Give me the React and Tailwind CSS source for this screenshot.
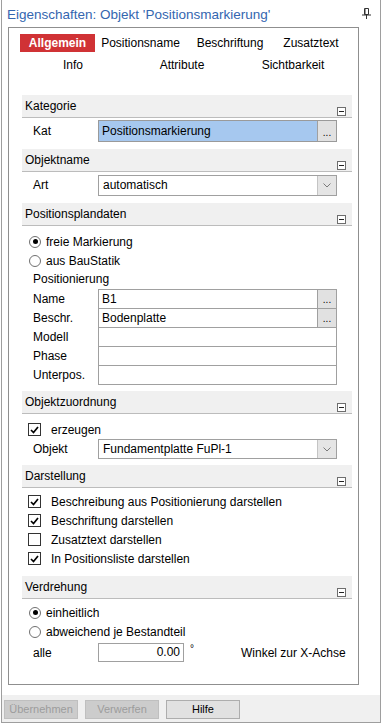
import clsx from 'clsx';

const Minus = () => (
  <span className="mb-[1px] flex h-[9px] w-[9px] items-center justify-center self-end border border-[#6d6d6d] bg-white">
    <span className="h-px w-[5px] bg-[#222]" />
  </span>
);

const SectionHeader = ({ title }) => (
  <div className="flex h-[23px] items-center justify-between border-b border-[#bcbcbc] bg-[#f0f0f0] pl-[3px] pr-[6px]">
    <span className="leading-[15px]">{title}</span>
    <Minus />
  </div>
);

const Dots = () => (
  <span className="flex w-[19px] items-end justify-center border-l border-[#a0a0a0] bg-[#e1e1e1] pb-[3px] text-[10px] leading-[10px]">
    ...
  </span>
);

const Chevron = () => (
  <span className="flex w-[19px] items-center justify-center border-l border-[#c4c4c4] bg-[#e5e5e5]">
    <svg width="8" height="5" viewBox="0 0 8 5">
      <path d="M0.5 0.5 L4 4 L7.5 0.5" fill="none" stroke="#7a7a7a" strokeWidth="1" />
    </svg>
  </span>
);

const Combo = ({ value, className }) => (
  <div className={clsx('flex w-[239px] border border-[#a0a0a0] bg-white', className)}>
    <span className="flex-1 pl-[4px] leading-[18px]">{value}</span>
    <Chevron />
  </div>
);

const Label = ({ children }) => <span className="w-[76px] shrink-0 pl-[11px]">{children}</span>;

const Check = ({ checked, label }) => (
  <div className="flex h-[19px] items-center pl-[6px]">
    <span className="flex h-[13px] w-[13px] items-center justify-center border border-[#333] bg-white">
      {checked && (
        <svg width="9" height="8" viewBox="0 0 9 8">
          <path d="M1 4 L3.5 6.5 L8 1" fill="none" stroke="#000" strokeWidth="1.7" />
        </svg>
      )}
    </span>
    <span className="ml-[10px]">{label}</span>
  </div>
);

const Radio = ({ checked, label }) => (
  <div className="flex h-[19px] items-center pl-[7px]">
    <span className="flex h-[12px] w-[12px] items-center justify-center rounded-full border border-[#707070] bg-white">
      {checked && <span className="h-[5px] w-[5px] rounded-full bg-black" />}
    </span>
    <span className="ml-[5px]">{label}</span>
  </div>
);

const positionFields = [
  { label: 'Name', value: 'B1', dots: true },
  { label: 'Beschr.', value: 'Bodenplatte', dots: true },
  { label: 'Modell', value: '' },
  { label: 'Phase', value: '' },
  { label: 'Unterpos.', value: '' },
];

const App = () => {
  return (
    <div className="h-[724px] w-[383px] bg-white font-['Liberation_Sans',Arial,sans-serif] text-[12px] text-black">
      <div className="ml-[1px] flex h-[723px] w-[380px] flex-col border-b border-l border-r border-[#9e9e9e]">
        <div className="flex h-[27px] shrink-0 justify-between pl-[5px] pr-[9px]">
          <span className="pt-[6px] text-[13.5px] leading-[17px] text-[#3466b0]">
            Eigenschaften: Objekt 'Positionsmarkierung'
          </span>
          <svg className="mt-[8px]" width="9" height="11" viewBox="0 0 9 11">
            <path d="M2.5 0.5h4v6h-4z" fill="none" stroke="#333" />
            <path d="M3 1v5" stroke="#333" />
            <path d="M0 7h9" stroke="#333" />
            <path d="M4.5 7v4" stroke="#333" />
          </svg>
        </div>

        <div className="ml-[6px] h-[658px] w-[351px] shrink-0 border border-[#8f8f8f]">
          <div className="flex pl-[11px] pt-[6px]">
            <span className="h-[18px] w-[75px] bg-[#d03235] text-center font-bold leading-[18px] text-white">
              Allgemein
            </span>
            <span className="w-[91px] text-center leading-[18px]">Positionsname</span>
            <span className="w-[88px] text-center leading-[18px]">Beschriftung</span>
            <span className="w-[74px] text-center leading-[18px]">Zusatztext</span>
          </div>
          <div className="mt-[4px] flex pl-[11px]">
            <span className="w-[106px] text-center leading-[18px]">Info</span>
            <span className="w-[112px] text-center leading-[18px]">Attribute</span>
            <span className="w-[110px] text-center leading-[18px]">Sichtbarkeit</span>
          </div>

          <div className="ml-[13px] mt-[21px] w-[330px]">
            <SectionHeader title="Kategorie" />
            <div className="flex h-[31px] items-start pt-[2px]">
              <span className="w-[76px] shrink-0 pl-[11px] leading-[22px]">Kat</span>
              <div className="flex h-[22px] w-[239px] border border-[#9a9a9a] bg-[#a6c8ef]">
                <span className="flex-1 pl-[3px] leading-[20px]">Positionsmarkierung</span>
                <Dots />
              </div>
            </div>

            <SectionHeader title="Objektname" />
            <div className="flex h-[31px] items-start pt-[3px]">
              <span className="w-[76px] shrink-0 pl-[11px] leading-[21px]">Art</span>
              <Combo value="automatisch" className="h-[21px]" />
            </div>

            <SectionHeader title="Positionsplandaten" />
            <div className="h-[165px] pt-[6px]">
              <Radio checked label="freie Markierung" />
              <Radio label="aus BauStatik" />
              <div className="h-[19px] pl-[11px] leading-[19px]">Positionierung</div>
              <div className="flex">
                <div className="w-[76px] shrink-0 pl-[11px] pt-px">
                  {positionFields.map((f) => (
                    <div key={f.label} className="h-[19px] leading-[18px]">
                      {f.label}
                    </div>
                  ))}
                </div>
                <div className="w-[239px] border border-[#a0a0a0]">
                  {positionFields.map((f, i) => (
                    <div
                      key={f.label}
                      className={clsx('flex', i === 0 ? 'h-[18px]' : 'h-[19px] border-t border-[#a0a0a0]')}
                    >
                      <span className="flex-1 pl-[3px] leading-[18px]">{f.value}</span>
                      {f.dots && <Dots />}
                    </div>
                  ))}
                </div>
              </div>
            </div>

            <SectionHeader title="Objektzuordnung" />
            <div className="h-[51px] pt-[6px]">
              <Check checked label="erzeugen" />
              <div className="flex items-center">
                <Label>Objekt</Label>
                <Combo value="Fundamentplatte FuPl-1" className="h-[20px]" />
              </div>
            </div>

            <SectionHeader title="Darstellung" />
            <div className="h-[88px] pt-[4px]">
              <Check checked label="Beschreibung aus Positionierung darstellen" />
              <Check checked label="Beschriftung darstellen" />
              <Check label="Zusatztext darstellen" />
              <Check checked label="In Positionsliste darstellen" />
            </div>

            <SectionHeader title="Verdrehung" />
            <div className="pt-[4px]">
              <Radio checked label="einheitlich" />
              <Radio label="abweichend je Bestandteil" />
              <div className="mt-[2px] flex items-center">
                <Label>alle</Label>
                <span className="h-[19px] w-[86px] border border-[#a0a0a0] pr-[3px] text-right leading-[17px]">
                  0.00
                </span>
                <span className="w-[57px] self-start pl-[6px] text-[10px] leading-[12px]">°</span>
                <span>Winkel zur X-Achse</span>
              </div>
            </div>
          </div>
        </div>

        <div className="mt-[10px] flex flex-1 gap-[7px] bg-[#f0f0f0] pl-[2px] pt-[5px]">
          <span className="h-[19px] w-[74px] border border-[#bfbfbf] bg-[#cccccc] text-center text-[11px] leading-[17px] text-[#9c9c9c]">
            Übernehmen
          </span>
          <span className="h-[19px] w-[74px] border border-[#bfbfbf] bg-[#cccccc] text-center text-[11px] leading-[17px] text-[#9c9c9c]">
            Verwerfen
          </span>
          <span className="h-[19px] w-[74px] border border-[#adadad] bg-[#e1e1e1] text-center text-[11px] leading-[17px]">
            Hilfe
          </span>
        </div>
      </div>
    </div>
  );
};

export default App;
